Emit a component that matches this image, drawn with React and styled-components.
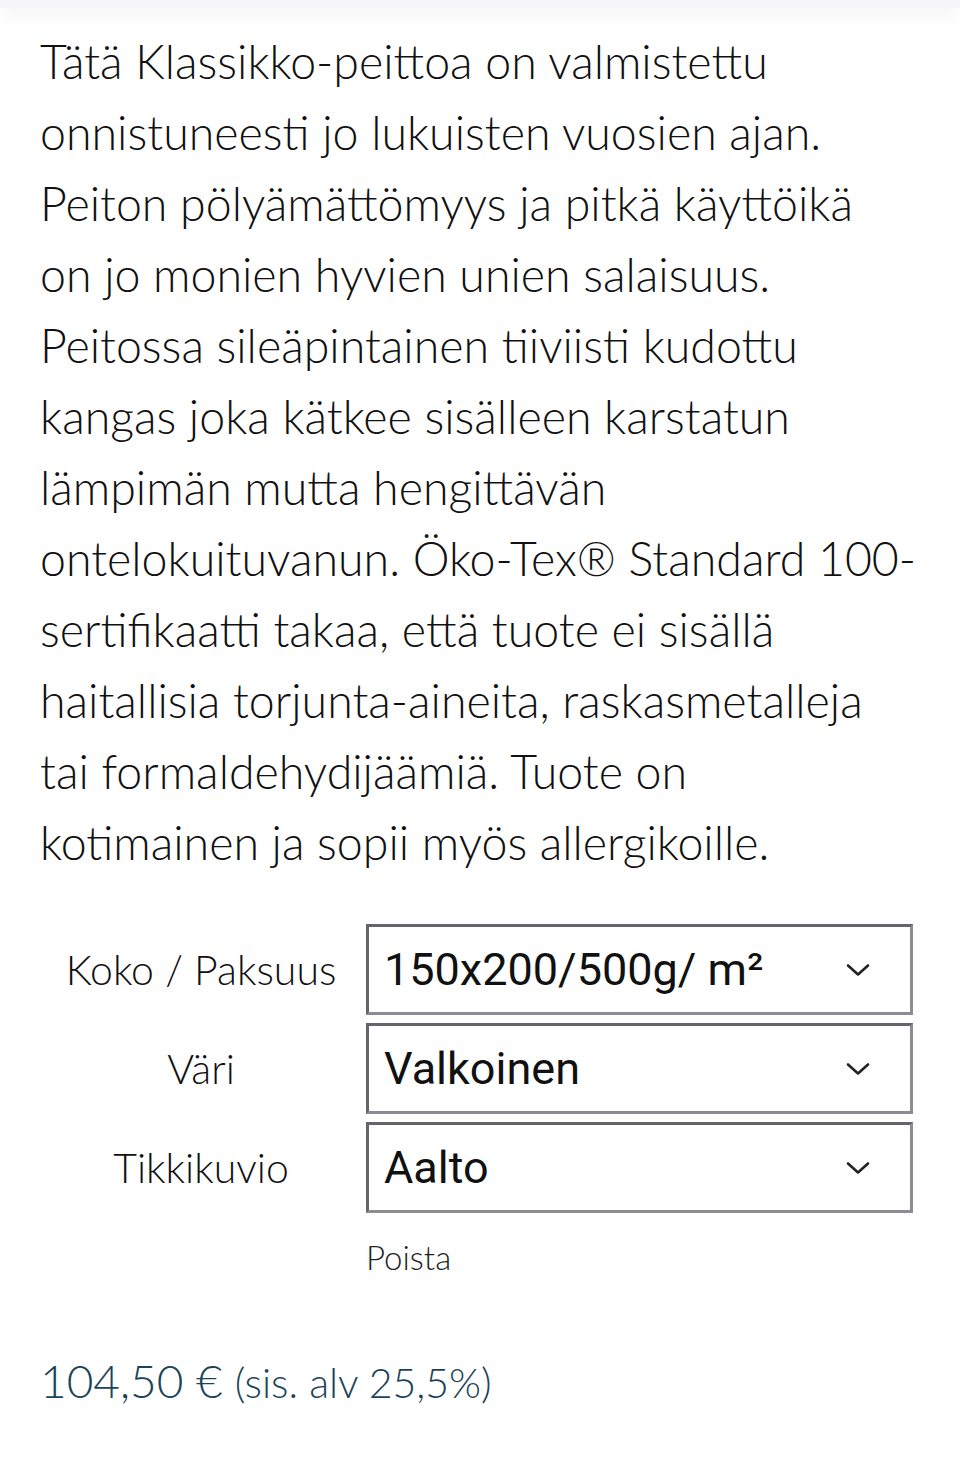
import React from "react";
import styled, { createGlobalStyle } from "styled-components";

const Global = createGlobalStyle`
  html, body {
    margin: 0;
    padding: 0;
    background: #fff;
  }
  body {
    font-family: Lato, "Noto Sans", sans-serif;
    font-weight: 300;
    color: #111;
  }
`;

const TopBar = styled.div`
  height: 8px;
  background: #f7f7f9;
  box-shadow: 0 6px 18px rgba(0, 0, 0, 0.08);
`;

const Page = styled.div`
  padding: 18px 40px 60px 40px;
`;

const Description = styled.p`
  margin: 0;
  font-size: 46.5px;
  line-height: 71px;
  color: #111;
`;

const Line = styled.span`
  display: block;
  white-space: nowrap;
`;

const Options = styled.div`
  margin-top: 46px;
  display: grid;
  grid-template-columns: 326px 547px;
  row-gap: 8px;
  align-items: center;
`;

const Label = styled.div`
  text-align: center;
  font-size: 41px;
  padding-right: 4px;
  color: #111;
`;

const Select = styled.div`
  height: 91px;
  box-sizing: border-box;
  border: 3px solid;
  border-color: #64646a #8c8c94 #8c8c94 #64646a;
  display: flex;
  align-items: center;
  justify-content: space-between;
  padding: 0 40px 0 15px;
  font-family: Roboto, "Noto Sans", sans-serif;
  font-weight: 400;
  font-size: 45px;
  color: #111;
`;

const Remove = styled.div`
  grid-column: 2;
  margin-top: 16px;
  font-size: 33px;
  color: #222;
`;

const Price = styled.div`
  margin-top: 76px;
  color: #1b4459;
  font-size: 46px;
  display: flex;
  align-items: baseline;
  gap: 12px;
`;

const Tax = styled.span`
  font-size: 41px;
`;

const Chevron = () => (
  <svg width="24" height="14" viewBox="0 0 24 14" fill="none">
    <path d="M2 2.5 L12 11.5 L22 2.5" stroke="#222" strokeWidth="2.6" strokeLinecap="round" strokeLinejoin="round" />
  </svg>
);

const lines = [
  "Tätä Klassikko-peittoa on valmistettu",
  "onnistuneesti jo lukuisten vuosien ajan.",
  "Peiton pölyämättömyys ja pitkä käyttöikä",
  "on jo monien hyvien unien salaisuus.",
  "Peitossa sileäpintainen tiiviisti kudottu",
  "kangas joka kätkee sisälleen karstatun",
  "lämpimän mutta hengittävän",
  "ontelokuituvanun. Öko-Tex® Standard 100-",
  "sertifikaatti takaa, että tuote ei sisällä",
  "haitallisia torjunta-aineita, raskasmetalleja",
  "tai formaldehydijäämiä. Tuote on",
  "kotimainen ja sopii myös allergikoille.",
];

const options = [
  { label: "Koko / Paksuus", value: "150x200/500g/ m²" },
  { label: "Väri", value: "Valkoinen" },
  { label: "Tikkikuvio", value: "Aalto" },
];

export default function App() {
  return (
    <>
      <Global />
      <TopBar />
      <Page>
        <Description>
          {lines.map((l) => (
            <Line key={l}>{l}</Line>
          ))}
        </Description>
        <Options>
          {options.map((o) => (
            <React.Fragment key={o.label}>
              <Label>{o.label}</Label>
              <Select>
                <span>{o.value}</span>
                <Chevron />
              </Select>
            </React.Fragment>
          ))}
          <Remove>Poista</Remove>
        </Options>
        <Price>
          104,50 €<Tax>(sis. alv 25,5%)</Tax>
        </Price>
      </Page>
    </>
  );
}
